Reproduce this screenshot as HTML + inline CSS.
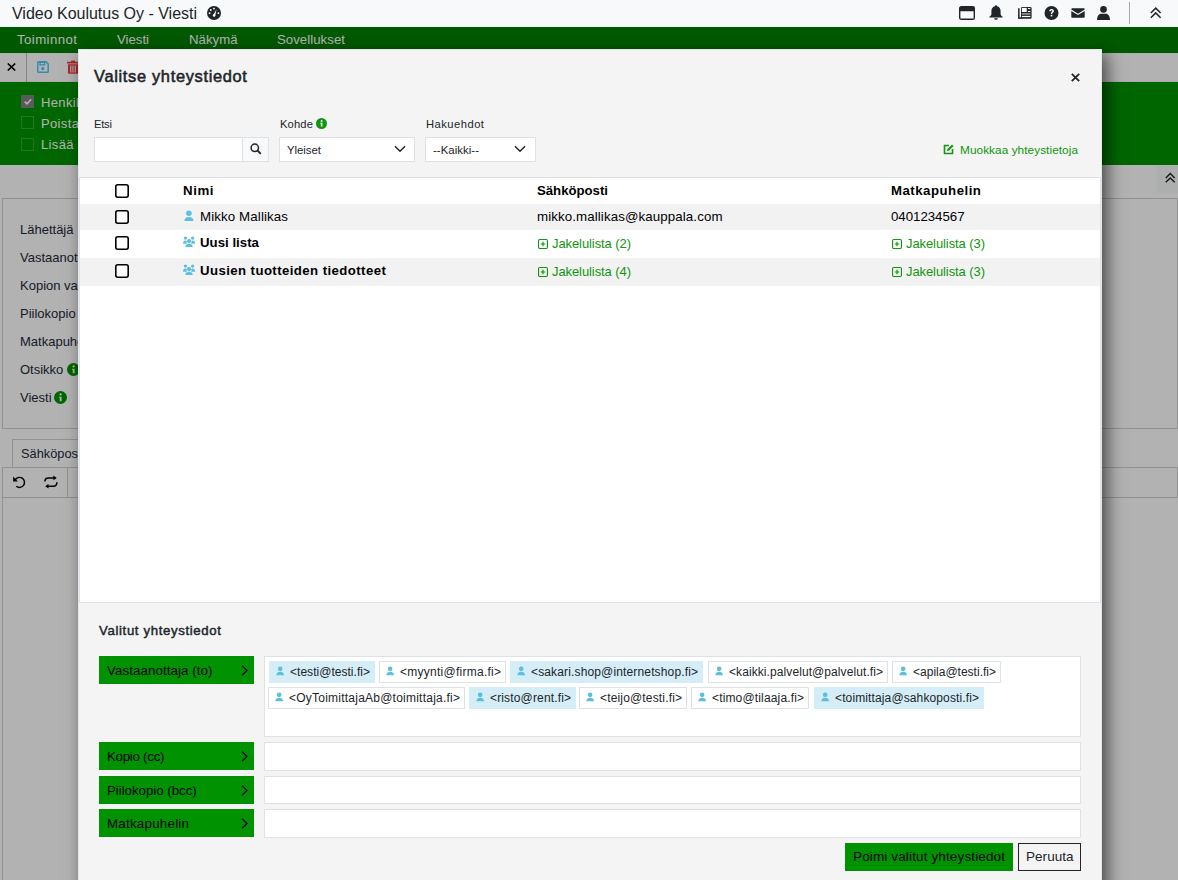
<!DOCTYPE html>
<html><head><meta charset="utf-8">
<style>
*{box-sizing:border-box;margin:0;padding:0}
html,body{width:1178px;height:880px;overflow:hidden;background:#fff;font-family:"Liberation Sans",sans-serif;color:#212529}
.abs{position:absolute}
.t{position:absolute;white-space:nowrap;line-height:1}
svg{overflow:visible}
</style></head><body>
<div class="abs" style="left:0;top:0;width:1178px;height:27px;background:#f8f9fa"></div>
<div class="t" style="left:12px;top:6.46px;font-size:16px;color:#212529;letter-spacing:-0.012px;">Video Koulutus Oy - Viesti</div>
<svg class="abs" style="left:207px;top:6px;" width="14" height="14" viewBox="0 0 14 14"><circle cx="7" cy="7" r="7" fill="#212529"/><circle cx="7" cy="2.6" r="0.9" fill="#fff"/><circle cx="3.8" cy="4" r="0.9" fill="#fff"/><circle cx="2.6" cy="7.2" r="0.9" fill="#fff"/><circle cx="11.4" cy="7.2" r="0.9" fill="#fff"/><path d="M6 9.6 L9.6 3.2 L8.2 9.6Z" fill="#fff"/><circle cx="7.1" cy="9.4" r="1.3" fill="#fff"/></svg>
<svg class="abs" style="left:959px;top:6px;" width="16" height="14" viewBox="0 0 16 14"><rect x="0.7" y="0.7" width="14.6" height="12.6" rx="1.6" fill="none" stroke="#212529" stroke-width="1.4"/><rect x="0.7" y="0.7" width="14.6" height="4.6" rx="1" fill="#212529"/></svg>
<svg class="abs" style="left:989px;top:5px;" width="14" height="15" viewBox="0 0 14 15"><path d="M7 0.3 C7.6 0.3 8 0.8 8 1.3 C10.4 1.8 11.6 3.6 11.6 6.2 L11.6 9 C11.6 10.2 12.6 11 13.6 11.8 L13.6 12.6 L0.4 12.6 L0.4 11.8 C1.4 11 2.4 10.2 2.4 9 L2.4 6.2 C2.4 3.6 3.6 1.8 6 1.3 C6 0.8 6.4 0.3 7 0.3Z M5.2 13.2 L8.8 13.2 C8.8 14.2 8 14.8 7 14.8 C6 14.8 5.2 14.2 5.2 13.2Z" fill="#212529"/></svg>
<svg class="abs" style="left:1014px;top:4px;" width="22" height="18" viewBox="0 0 22 18"><rect x="7" y="2.9" width="10.6" height="11.8" rx="1.3" fill="#212529"/><path d="M4.1 4.2 H5.6 V14.7 H7.5 V14.7 H4.1 Z" fill="#212529"/><rect x="4.1" y="13.3" width="5" height="1.4" rx="0.7" fill="#212529"/><rect x="7.9" y="3.9" width="4.8" height="4.1" fill="#fff"/><rect x="13.9" y="4.1" width="2.5" height="1" fill="#fff"/><rect x="13.9" y="7" width="2.5" height="1" fill="#fff"/><rect x="7.9" y="9" width="8.5" height="1.8" fill="#8a8d90"/><rect x="7.9" y="11.9" width="8.5" height="1.2" fill="#fff"/></svg>
<svg class="abs" style="left:1044px;top:6px;" width="15" height="14" viewBox="0 0 15 14"><circle cx="7.5" cy="7" r="7" fill="#212529"/><path d="M5.3 5.2 C5.3 3.8 6.3 3 7.6 3 C8.9 3 9.9 3.8 9.9 5 C9.9 6.5 8.2 6.7 8.2 8 L6.8 8 C6.8 6.2 8.4 6 8.4 5.1 C8.4 4.6 8 4.3 7.5 4.3 C7 4.3 6.7 4.7 6.7 5.2Z" fill="#fff"/><rect x="6.7" y="8.8" width="1.6" height="1.6" fill="#fff"/></svg>
<svg class="abs" style="left:1071px;top:7.7px;" width="14" height="10" viewBox="0 0 14 10"><path d="M0.3 1 C0.3 0.5 0.6 0.2 1.2 0.2 H12.8 C13.4 0.2 13.7 0.5 13.7 1 V1.6 L7 5.8 L0.3 1.6Z M0.3 3 L7 7.1 L13.7 3 V9 C13.7 9.5 13.4 9.8 12.8 9.8 H1.2 C0.6 9.8 0.3 9.5 0.3 9Z" fill="#212529"/></svg>
<svg class="abs" style="left:1097px;top:6px;" width="13" height="14" viewBox="0 0 13 14"><circle cx="6.5" cy="3.4" r="3.3" fill="#212529"/><path d="M0 14 C0 9.6 2.4 7.7 4.2 7.7 H8.8 C10.6 7.7 13 9.6 13 14Z" fill="#212529"/></svg>
<div class="abs" style="left:1129px;top:2px;width:1px;height:22px;background:#a4a8ac"></div>
<svg class="abs" style="left:1150px;top:6.5px;" width="11.5" height="11.5" viewBox="0 0 12 12"><path d="M0.9 6.2 L6 1.2 L11.1 6.2 M0.9 11.2 L6 6.2 L11.1 11.2" fill="none" stroke="#212529" stroke-width="1.6"/></svg>
<div class="abs" style="left:0;top:27px;width:1178px;height:26px;background:#008000"></div>
<div class="t" style="left:17px;top:32.83px;font-size:13.2px;color:#fff;letter-spacing:0.438px;">Toiminnot</div>
<div class="t" style="left:117px;top:32.83px;font-size:13.2px;color:#fff;letter-spacing:-0.008px;">Viesti</div>
<div class="t" style="left:189px;top:32.83px;font-size:13.2px;color:#fff;letter-spacing:0.038px;">Näkymä</div>
<div class="t" style="left:277px;top:32.83px;font-size:13.2px;color:#fff;letter-spacing:0.050px;">Sovellukset</div>
<div class="abs" style="left:0;top:53px;width:1178px;height:29px;background:#fff;border-top:1px solid #fafafa;border-bottom:1px solid #fdf0f5"></div>
<div class="abs" style="left:26px;top:53px;width:1px;height:29px;background:#b8c0c8"></div>
<svg class="abs" style="left:7px;top:63px;" width="9" height="8" viewBox="0 0 9 8"><path d="M0.8 0.5 L8.2 7.5 M8.2 0.5 L0.8 7.5" stroke="#000" stroke-width="1.7"/></svg>
<svg class="abs" style="left:37px;top:61px;" width="12" height="12" viewBox="0 0 12 12"><path d="M1.6 0.8 H9 L11.2 3 V10.4 C11.2 10.9 10.9 11.2 10.4 11.2 H1.6 C1.1 11.2 0.8 10.9 0.8 10.4 V1.6 C0.8 1.1 1.1 0.8 1.6 0.8Z" fill="none" stroke="#4cc8f8" stroke-width="1.5"/><rect x="3" y="1.2" width="4.6" height="2.6" fill="none" stroke="#4cc8f8" stroke-width="1.3"/><circle cx="5.8" cy="7.6" r="1.6" fill="#4cc8f8"/></svg>
<svg class="abs" style="left:67px;top:60px;" width="12" height="14" viewBox="0 0 12 14"><rect x="0" y="1.8" width="12" height="1.7" rx="0.5" fill="#f23c3c"/><rect x="4" y="0.6" width="4" height="1.6" fill="#f23c3c"/><path d="M1 4.3 H11 V13 C11 13.5 10.6 13.8 10 13.8 H2 C1.4 13.8 1 13.5 1 13Z" fill="#f23c3c"/><rect x="3.2" y="5.5" width="1.1" height="7" fill="#fff"/><rect x="5.45" y="5.5" width="1.1" height="7" fill="#fff"/><rect x="7.7" y="5.5" width="1.1" height="7" fill="#fff"/></svg>
<div class="abs" style="left:0;top:82px;width:1178px;height:83px;background:#009200"></div>
<div class="abs" style="left:21px;top:95px;width:13px;height:13px;background:#818181"></div>
<svg class="abs" style="left:24px;top:98px;" width="8" height="7" viewBox="0 0 8 7"><path d="M0.8 3.6 L3 5.8 L7.2 1.2" fill="none" stroke="#fff" stroke-width="1.6"/></svg>
<div class="abs" style="left:21px;top:116px;width:13px;height:13px;border:1px solid #3aa53a"></div>
<div class="abs" style="left:21px;top:138px;width:13px;height:13px;border:1px solid #3aa53a"></div>
<div class="t" style="left:41px;top:96.00px;font-size:13px;color:#fff;letter-spacing:0.35px;">Henkilö</div>
<div class="t" style="left:41px;top:116.50px;font-size:13px;color:#fff;letter-spacing:0.35px;">Poista</div>
<div class="t" style="left:41px;top:137.50px;font-size:13px;color:#fff;letter-spacing:0.35px;">Lisää allekirjoitus</div>
<div class="abs" style="left:2px;top:198px;width:1176px;height:231px;border:1px solid #d0d0d0"></div>
<div class="abs" style="left:1157px;top:166px;width:21px;height:27px;background:#f8f9fa"></div>
<svg class="abs" style="left:1165px;top:171.5px;" width="10.5" height="11.5" viewBox="0 0 12 12"><path d="M0.9 6.2 L6 1.2 L11.1 6.2 M0.9 11.2 L6 6.2 L11.1 11.2" fill="none" stroke="#212529" stroke-width="1.6"/></svg>
<div class="t" style="left:20px;top:223.00px;font-size:13px;color:#1e2a3a;">Lähettäjä</div>
<div class="t" style="left:20px;top:251.00px;font-size:13px;color:#1e2a3a;">Vastaanottaja</div>
<div class="t" style="left:20px;top:279.00px;font-size:13px;color:#1e2a3a;">Kopion vastaanottaja</div>
<div class="t" style="left:20px;top:307.00px;font-size:13px;color:#1e2a3a;">Piilokopio</div>
<div class="t" style="left:20px;top:335.00px;font-size:13px;color:#1e2a3a;">Matkapuhelin</div>
<div class="t" style="left:20px;top:363.00px;font-size:13px;color:#1e2a3a;">Otsikko</div>
<div class="t" style="left:20px;top:391.00px;font-size:13px;color:#1e2a3a;">Viesti</div>
<svg class="abs" style="left:67px;top:363px;" width="13" height="13" viewBox="0 0 12 12"><circle cx="6" cy="6" r="6" fill="#009200"/><circle cx="6.1" cy="3.2" r="1.05" fill="#fff"/><path d="M4.7 5.2 H7 V9.4 H5.3 V6.2 H4.7 Z" fill="#fff"/></svg>
<svg class="abs" style="left:54px;top:391px;" width="13" height="13" viewBox="0 0 12 12"><circle cx="6" cy="6" r="6" fill="#009200"/><circle cx="6.1" cy="3.2" r="1.05" fill="#fff"/><path d="M4.7 5.2 H7 V9.4 H5.3 V6.2 H4.7 Z" fill="#fff"/></svg>
<div class="abs" style="left:12px;top:439px;width:120px;height:29px;border:1px solid #d0d0d0;border-bottom:none"></div>
<div class="t" style="left:21px;top:448.16px;font-size:12.8px;color:#1e2a3a;">Sähköposti</div>
<div class="abs" style="left:2px;top:467px;width:1176px;height:31px;border:1px solid #d0d0d0"></div>
<div class="abs" style="left:67px;top:467px;width:1px;height:31px;background:#d0d0d0"></div>
<svg class="abs" style="left:12px;top:476px;" width="14" height="13" viewBox="0 0 14 13"><path d="M3.17 3.9 A5 5 0 1 1 4.29 10.23" fill="none" stroke="#000" stroke-width="1.45"/><path d="M1.1 0.6 L1.1 5.4 L5.9 5.4Z" fill="#000"/></svg>
<svg class="abs" style="left:44px;top:476px;" width="14" height="14" viewBox="0 0 14 14"><path d="M0.9 5.6 C0.9 3.4 2.1 1.9 4.5 1.9 H10" fill="none" stroke="#000" stroke-width="1.5"/><path d="M9.4 -0.4 L12.7 1.9 L9.4 4.2Z" fill="#000"/><path d="M12.9 6.2 C12.9 8.6 11.7 10.2 9.3 10.2 H4" fill="none" stroke="#000" stroke-width="1.5"/><path d="M4.5 7.9 L1.2 10.2 L4.5 12.5Z" fill="#000"/></svg>
<div class="abs" style="left:2px;top:497px;width:1176px;height:400px;border-left:1px solid #d0d0d0"></div>
<div class="abs" style="left:0;top:27px;width:1178px;height:853px;background:rgba(0,0,0,0.3)"></div>
<div class="abs" style="left:78px;top:49px;width:1024px;height:880px;background:#f4f4f4;border:1px solid #e3e6ea;box-shadow:5px 5px 16px rgba(0,0,0,0.6)"></div>
<div class="t" style="left:94px;top:68.12px;font-size:16.4px;color:#212529;letter-spacing:0.680px;-webkit-text-stroke:0.55px #212529;">Valitse yhteystiedot</div>
<svg class="abs" style="left:1071px;top:73px;" width="9" height="9" viewBox="0 0 9 9"><path d="M0.8 0.8 L8.2 8.2 M8.2 0.8 L0.8 8.2" stroke="#212529" stroke-width="1.8"/></svg>
<div class="t" style="left:94px;top:118.52px;font-size:11.2px;color:#212529;letter-spacing:-0.224px;">Etsi</div>
<div class="t" style="left:280px;top:118.52px;font-size:11.2px;color:#212529;letter-spacing:0.153px;">Kohde</div>
<svg class="abs" style="left:316px;top:118px;" width="11" height="11" viewBox="0 0 12 12"><circle cx="6" cy="6" r="6" fill="#109610"/><circle cx="6.1" cy="3.2" r="1.05" fill="#fff"/><path d="M4.7 5.2 H7 V9.4 H5.3 V6.2 H4.7 Z" fill="#fff"/></svg>
<div class="t" style="left:426px;top:118.52px;font-size:11.2px;color:#212529;letter-spacing:0.478px;">Hakuehdot</div>
<div class="abs" style="left:94px;top:137px;width:175px;height:25px;background:#fff;border:1px solid #dee2e6"></div>
<div class="abs" style="left:242px;top:137px;width:27px;height:25px;background:#f8f9fa;border:1px solid #dee2e6"></div>
<svg class="abs" style="left:250px;top:143px;" width="12" height="12" viewBox="0 0 12 12"><circle cx="4.8" cy="4.8" r="3.7" fill="none" stroke="#212529" stroke-width="1.5"/><path d="M7.5 7.5 L10.8 10.8" stroke="#212529" stroke-width="1.8"/></svg>
<div class="abs" style="left:279px;top:137px;width:136px;height:25px;background:#fff;border:1px solid #dee2e6"></div>
<div class="t" style="left:287px;top:144.85px;font-size:11.4px;color:#212529;letter-spacing:-0.036px;">Yleiset</div>
<svg class="abs" style="left:394px;top:145px;" width="12" height="8" viewBox="0 0 12 8"><path d="M1 1.2 L6 6.2 L11 1.2" fill="none" stroke="#212529" stroke-width="1.45"/></svg>
<div class="abs" style="left:425px;top:137px;width:111px;height:25px;background:#fff;border:1px solid #dee2e6"></div>
<div class="t" style="left:433px;top:144.85px;font-size:11.4px;color:#212529;letter-spacing:0.045px;">--Kaikki--</div>
<svg class="abs" style="left:514px;top:145px;" width="12" height="8" viewBox="0 0 12 8"><path d="M1 1.2 L6 6.2 L11 1.2" fill="none" stroke="#212529" stroke-width="1.45"/></svg>
<svg class="abs" style="left:943px;top:144px;" width="11" height="11" viewBox="0 0 11 11"><path d="M6 1.5 H1.5 V9.5 H9.5 V5" fill="none" stroke="#109610" stroke-width="1.6"/><path d="M4 7 L4.3 5.2 L9 0.5 L10.5 2 L5.8 6.7Z" fill="#109610"/></svg>
<div class="t" style="left:960px;top:145.01px;font-size:11.8px;color:#109610;letter-spacing:0.062px;">Muokkaa yhteystietoja</div>
<div class="abs" style="left:79px;top:177px;width:1022px;height:426px;background:#fff;border:1px solid #dee2e6"></div>
<div class="abs" style="left:80px;top:204px;width:1020px;height:26px;background:#f2f2f2"></div>
<div class="abs" style="left:80px;top:258px;width:1020px;height:28px;background:#f2f2f2"></div>
<svg class="abs" style="left:115px;top:184px;" width="14" height="14" viewBox="0 0 14 14"><rect x="0.8" y="0.8" width="12.4" height="12.4" rx="1.9" fill="#fff" stroke="#000" stroke-width="1.6"/></svg>
<div class="t" style="left:183px;top:183.74px;font-size:13.3px;color:#000;font-weight:700;letter-spacing:0.560px;">Nimi</div>
<div class="t" style="left:537px;top:183.83px;font-size:13.2px;color:#000;font-weight:700;letter-spacing:-0.016px;">Sähköposti</div>
<div class="t" style="left:891px;top:183.83px;font-size:13.2px;color:#000;font-weight:700;letter-spacing:0.514px;">Matkapuhelin</div>
<svg class="abs" style="left:115px;top:210px;" width="14" height="14" viewBox="0 0 14 14"><rect x="0.8" y="0.8" width="12.4" height="12.4" rx="1.9" fill="#fff" stroke="#000" stroke-width="1.6"/></svg>
<svg class="abs" style="left:184px;top:210px;" width="10.0" height="11.0" viewBox="0 0 10 11"><circle cx="4.9" cy="3.3" r="2.75" fill="#5bc0de"/><path d="M0.4 11 C0.4 8.3 2.2 6.9 4.9 6.9 C7.6 6.9 9.5 8.3 9.5 11 Z" fill="#5bc0de"/></svg>
<div class="t" style="left:200px;top:209.74px;font-size:13.3px;color:#000;letter-spacing:0.118px;">Mikko Mallikas</div>
<div class="t" style="left:537px;top:209.74px;font-size:13.3px;color:#000;letter-spacing:0.105px;">mikko.mallikas@kauppala.com</div>
<div class="t" style="left:891px;top:209.74px;font-size:13.3px;color:#000;letter-spacing:-0.041px;">0401234567</div>
<svg class="abs" style="left:115px;top:236px;" width="14" height="14" viewBox="0 0 14 14"><rect x="0.8" y="0.8" width="12.4" height="12.4" rx="1.9" fill="#fff" stroke="#000" stroke-width="1.6"/></svg>
<svg class="abs" style="left:183px;top:236px;" width="12" height="11" viewBox="0 0 12 11"><circle cx="2.5" cy="2.1" r="1.65" fill="#5bc0de"/><circle cx="9.6" cy="2.1" r="1.65" fill="#5bc0de"/><circle cx="6.05" cy="5.1" r="2.15" fill="#5bc0de"/><path d="M0 7.8 C0 5.6 1 4.5 2.5 4.5 C3.2 4.5 3.6 4.7 3.9 5 C3.7 5.6 3.6 6.2 3.7 7.8Z" fill="#5bc0de"/><path d="M12.1 7.8 C12.1 5.6 11.1 4.5 9.6 4.5 C8.9 4.5 8.5 4.7 8.2 5 C8.4 5.6 8.5 6.2 8.4 7.8Z" fill="#5bc0de"/><path d="M2.4 11 C2.4 8.7 3.8 7.7 6.05 7.7 C8.3 7.7 9.7 8.7 9.7 11Z" fill="#5bc0de"/></svg>
<div class="t" style="left:200px;top:235.83px;font-size:13.2px;color:#000;font-weight:700;letter-spacing:0.035px;">Uusi lista</div>
<svg class="abs" style="left:537.7px;top:239px;" width="10" height="10" viewBox="0 0 10 10"><rect x="0.55" y="0.55" width="8.9" height="8.9" rx="1.2" fill="none" stroke="#109610" stroke-width="1.1"/><path d="M5 2.8v4.4M2.8 5h4.4" stroke="#109610" stroke-width="1.2"/></svg>
<div class="t" style="left:552px;top:236.50px;font-size:13px;color:#109610;letter-spacing:-0.086px;">Jakelulista (2)</div>
<svg class="abs" style="left:891.8px;top:239px;" width="10" height="10" viewBox="0 0 10 10"><rect x="0.55" y="0.55" width="8.9" height="8.9" rx="1.2" fill="none" stroke="#109610" stroke-width="1.1"/><path d="M5 2.8v4.4M2.8 5h4.4" stroke="#109610" stroke-width="1.2"/></svg>
<div class="t" style="left:906px;top:236.50px;font-size:13px;color:#109610;letter-spacing:-0.086px;">Jakelulista (3)</div>
<svg class="abs" style="left:115px;top:264px;" width="14" height="14" viewBox="0 0 14 14"><rect x="0.8" y="0.8" width="12.4" height="12.4" rx="1.9" fill="#fff" stroke="#000" stroke-width="1.6"/></svg>
<svg class="abs" style="left:183px;top:264px;" width="12" height="11" viewBox="0 0 12 11"><circle cx="2.5" cy="2.1" r="1.65" fill="#5bc0de"/><circle cx="9.6" cy="2.1" r="1.65" fill="#5bc0de"/><circle cx="6.05" cy="5.1" r="2.15" fill="#5bc0de"/><path d="M0 7.8 C0 5.6 1 4.5 2.5 4.5 C3.2 4.5 3.6 4.7 3.9 5 C3.7 5.6 3.6 6.2 3.7 7.8Z" fill="#5bc0de"/><path d="M12.1 7.8 C12.1 5.6 11.1 4.5 9.6 4.5 C8.9 4.5 8.5 4.7 8.2 5 C8.4 5.6 8.5 6.2 8.4 7.8Z" fill="#5bc0de"/><path d="M2.4 11 C2.4 8.7 3.8 7.7 6.05 7.7 C8.3 7.7 9.7 8.7 9.7 11Z" fill="#5bc0de"/></svg>
<div class="t" style="left:200px;top:263.83px;font-size:13.2px;color:#000;font-weight:700;letter-spacing:0.424px;">Uusien tuotteiden tiedotteet</div>
<svg class="abs" style="left:537.7px;top:267px;" width="10" height="10" viewBox="0 0 10 10"><rect x="0.55" y="0.55" width="8.9" height="8.9" rx="1.2" fill="none" stroke="#109610" stroke-width="1.1"/><path d="M5 2.8v4.4M2.8 5h4.4" stroke="#109610" stroke-width="1.2"/></svg>
<div class="t" style="left:552px;top:264.50px;font-size:13px;color:#109610;letter-spacing:-0.086px;">Jakelulista (4)</div>
<svg class="abs" style="left:891.8px;top:267px;" width="10" height="10" viewBox="0 0 10 10"><rect x="0.55" y="0.55" width="8.9" height="8.9" rx="1.2" fill="none" stroke="#109610" stroke-width="1.1"/><path d="M5 2.8v4.4M2.8 5h4.4" stroke="#109610" stroke-width="1.2"/></svg>
<div class="t" style="left:906px;top:264.50px;font-size:13px;color:#109610;letter-spacing:-0.086px;">Jakelulista (3)</div>
<div class="t" style="left:99px;top:623.83px;font-size:13.2px;color:#212529;letter-spacing:0.641px;-webkit-text-stroke:0.45px #212529;">Valitut yhteystiedot</div>
<div class="abs" style="left:99px;top:656px;width:155px;height:28px;background:#009200"></div>
<div class="t" style="left:107px;top:663.54px;font-size:13.3px;color:#000;letter-spacing:0.088px;">Vastaanottaja (to)</div>
<svg class="abs" style="left:241px;top:665px;" width="7" height="11" viewBox="0 0 7 11"><path d="M1 0.8 L6 5.5 L1 10.2" fill="none" stroke="#000" stroke-width="1.3"/></svg>
<div class="abs" style="left:99px;top:742px;width:155px;height:28px;background:#009200"></div>
<div class="t" style="left:107px;top:749.54px;font-size:13.3px;color:#000;letter-spacing:-0.264px;">Kopio (cc)</div>
<svg class="abs" style="left:241px;top:751px;" width="7" height="11" viewBox="0 0 7 11"><path d="M1 0.8 L6 5.5 L1 10.2" fill="none" stroke="#000" stroke-width="1.3"/></svg>
<div class="abs" style="left:99px;top:776px;width:155px;height:28px;background:#009200"></div>
<div class="t" style="left:107px;top:783.54px;font-size:13.3px;color:#000;letter-spacing:-0.032px;">Piilokopio (bcc)</div>
<svg class="abs" style="left:241px;top:785px;" width="7" height="11" viewBox="0 0 7 11"><path d="M1 0.8 L6 5.5 L1 10.2" fill="none" stroke="#000" stroke-width="1.3"/></svg>
<div class="abs" style="left:99px;top:809px;width:155px;height:28px;background:#009200"></div>
<div class="t" style="left:107px;top:816.54px;font-size:13.3px;color:#000;letter-spacing:0.262px;">Matkapuhelin</div>
<svg class="abs" style="left:241px;top:818px;" width="7" height="11" viewBox="0 0 7 11"><path d="M1 0.8 L6 5.5 L1 10.2" fill="none" stroke="#000" stroke-width="1.3"/></svg>
<div class="abs" style="left:264px;top:656px;width:817px;height:81px;background:#fff;border:1px solid #dee2e6"></div>
<div class="abs" style="left:264px;top:742px;width:817px;height:28.5px;background:#fff;border:1px solid #dee2e6"></div>
<div class="abs" style="left:264px;top:776px;width:817px;height:28px;background:#fff;border:1px solid #dee2e6"></div>
<div class="abs" style="left:264px;top:809px;width:817px;height:29px;background:#fff;border:1px solid #dee2e6"></div>
<div class="abs" style="left:269px;top:661px;width:106px;height:22px;background:#d4edf7"></div>
<svg class="abs" style="left:276px;top:666px;" width="8.5" height="9.35" viewBox="0 0 10 11"><circle cx="4.9" cy="3.3" r="2.75" fill="#5bc0de"/><path d="M0.4 11 C0.4 8.3 2.2 6.9 4.9 6.9 C7.6 6.9 9.5 8.3 9.5 11 Z" fill="#5bc0de"/></svg>
<div class="t" style="left:290px;top:666.34px;font-size:12px;color:#212529;letter-spacing:0.030px;">&lt;testi@testi.fi&gt;</div>
<div class="abs" style="left:379px;top:661px;width:127px;height:22px;background:#fff;border:1px solid #dee2e6"></div>
<svg class="abs" style="left:386px;top:666px;" width="8.5" height="9.35" viewBox="0 0 10 11"><circle cx="4.9" cy="3.3" r="2.75" fill="#5bc0de"/><path d="M0.4 11 C0.4 8.3 2.2 6.9 4.9 6.9 C7.6 6.9 9.5 8.3 9.5 11 Z" fill="#5bc0de"/></svg>
<div class="t" style="left:400px;top:666.34px;font-size:12px;color:#212529;letter-spacing:0.258px;">&lt;myynti@firma.fi&gt;</div>
<div class="abs" style="left:510px;top:661px;width:193px;height:22px;background:#d4edf7"></div>
<svg class="abs" style="left:517px;top:666px;" width="8.5" height="9.35" viewBox="0 0 10 11"><circle cx="4.9" cy="3.3" r="2.75" fill="#5bc0de"/><path d="M0.4 11 C0.4 8.3 2.2 6.9 4.9 6.9 C7.6 6.9 9.5 8.3 9.5 11 Z" fill="#5bc0de"/></svg>
<div class="t" style="left:531px;top:666.34px;font-size:12px;color:#212529;letter-spacing:0.145px;">&lt;sakari.shop@internetshop.fi&gt;</div>
<div class="abs" style="left:708px;top:661px;width:180px;height:22px;background:#fff;border:1px solid #dee2e6"></div>
<svg class="abs" style="left:715px;top:666px;" width="8.5" height="9.35" viewBox="0 0 10 11"><circle cx="4.9" cy="3.3" r="2.75" fill="#5bc0de"/><path d="M0.4 11 C0.4 8.3 2.2 6.9 4.9 6.9 C7.6 6.9 9.5 8.3 9.5 11 Z" fill="#5bc0de"/></svg>
<div class="t" style="left:729px;top:666.34px;font-size:12px;color:#212529;letter-spacing:0.086px;">&lt;kaikki.palvelut@palvelut.fi&gt;</div>
<div class="abs" style="left:892px;top:661px;width:109px;height:22px;background:#fff;border:1px solid #dee2e6"></div>
<svg class="abs" style="left:899px;top:666px;" width="8.5" height="9.35" viewBox="0 0 10 11"><circle cx="4.9" cy="3.3" r="2.75" fill="#5bc0de"/><path d="M0.4 11 C0.4 8.3 2.2 6.9 4.9 6.9 C7.6 6.9 9.5 8.3 9.5 11 Z" fill="#5bc0de"/></svg>
<div class="t" style="left:913px;top:666.34px;font-size:12px;color:#212529;letter-spacing:0.007px;">&lt;apila@testi.fi&gt;</div>
<div class="abs" style="left:268px;top:687px;width:197px;height:22px;background:#fff;border:1px solid #dee2e6"></div>
<svg class="abs" style="left:275px;top:692px;" width="8.5" height="9.35" viewBox="0 0 10 11"><circle cx="4.9" cy="3.3" r="2.75" fill="#5bc0de"/><path d="M0.4 11 C0.4 8.3 2.2 6.9 4.9 6.9 C7.6 6.9 9.5 8.3 9.5 11 Z" fill="#5bc0de"/></svg>
<div class="t" style="left:289px;top:692.34px;font-size:12px;color:#212529;letter-spacing:0.233px;">&lt;OyToimittajaAb@toimittaja.fi&gt;</div>
<div class="abs" style="left:469px;top:687px;width:107px;height:22px;background:#d4edf7"></div>
<svg class="abs" style="left:476px;top:692px;" width="8.5" height="9.35" viewBox="0 0 10 11"><circle cx="4.9" cy="3.3" r="2.75" fill="#5bc0de"/><path d="M0.4 11 C0.4 8.3 2.2 6.9 4.9 6.9 C7.6 6.9 9.5 8.3 9.5 11 Z" fill="#5bc0de"/></svg>
<div class="t" style="left:490px;top:692.34px;font-size:12px;color:#212529;letter-spacing:0.151px;">&lt;risto@rent.fi&gt;</div>
<div class="abs" style="left:579px;top:687px;width:108px;height:22px;background:#fff;border:1px solid #dee2e6"></div>
<svg class="abs" style="left:586px;top:692px;" width="8.5" height="9.35" viewBox="0 0 10 11"><circle cx="4.9" cy="3.3" r="2.75" fill="#5bc0de"/><path d="M0.4 11 C0.4 8.3 2.2 6.9 4.9 6.9 C7.6 6.9 9.5 8.3 9.5 11 Z" fill="#5bc0de"/></svg>
<div class="t" style="left:600px;top:692.34px;font-size:12px;color:#212529;letter-spacing:0.163px;">&lt;teijo@testi.fi&gt;</div>
<div class="abs" style="left:691px;top:687px;width:118px;height:22px;background:#fff;border:1px solid #dee2e6"></div>
<svg class="abs" style="left:698px;top:692px;" width="8.5" height="9.35" viewBox="0 0 10 11"><circle cx="4.9" cy="3.3" r="2.75" fill="#5bc0de"/><path d="M0.4 11 C0.4 8.3 2.2 6.9 4.9 6.9 C7.6 6.9 9.5 8.3 9.5 11 Z" fill="#5bc0de"/></svg>
<div class="t" style="left:712px;top:692.34px;font-size:12px;color:#212529;letter-spacing:0.153px;">&lt;timo@tilaaja.fi&gt;</div>
<div class="abs" style="left:814px;top:687px;width:170px;height:22px;background:#d4edf7"></div>
<svg class="abs" style="left:821px;top:692px;" width="8.5" height="9.35" viewBox="0 0 10 11"><circle cx="4.9" cy="3.3" r="2.75" fill="#5bc0de"/><path d="M0.4 11 C0.4 8.3 2.2 6.9 4.9 6.9 C7.6 6.9 9.5 8.3 9.5 11 Z" fill="#5bc0de"/></svg>
<div class="t" style="left:835px;top:692.34px;font-size:12px;color:#212529;letter-spacing:0.123px;">&lt;toimittaja@sahkoposti.fi&gt;</div>
<div class="abs" style="left:845px;top:843px;width:168px;height:28px;background:#009200"></div>
<div class="t" style="left:853px;top:849.57px;font-size:13.5px;color:#000;letter-spacing:0.137px;">Poimi valitut yhteystiedot</div>
<div class="abs" style="left:1018px;top:843px;width:63px;height:28px;background:#f4f4f4;border:1px solid #212529"></div>
<div class="t" style="left:1026px;top:849.57px;font-size:13.5px;color:#212529;letter-spacing:0.053px;">Peruuta</div>
</body></html>
